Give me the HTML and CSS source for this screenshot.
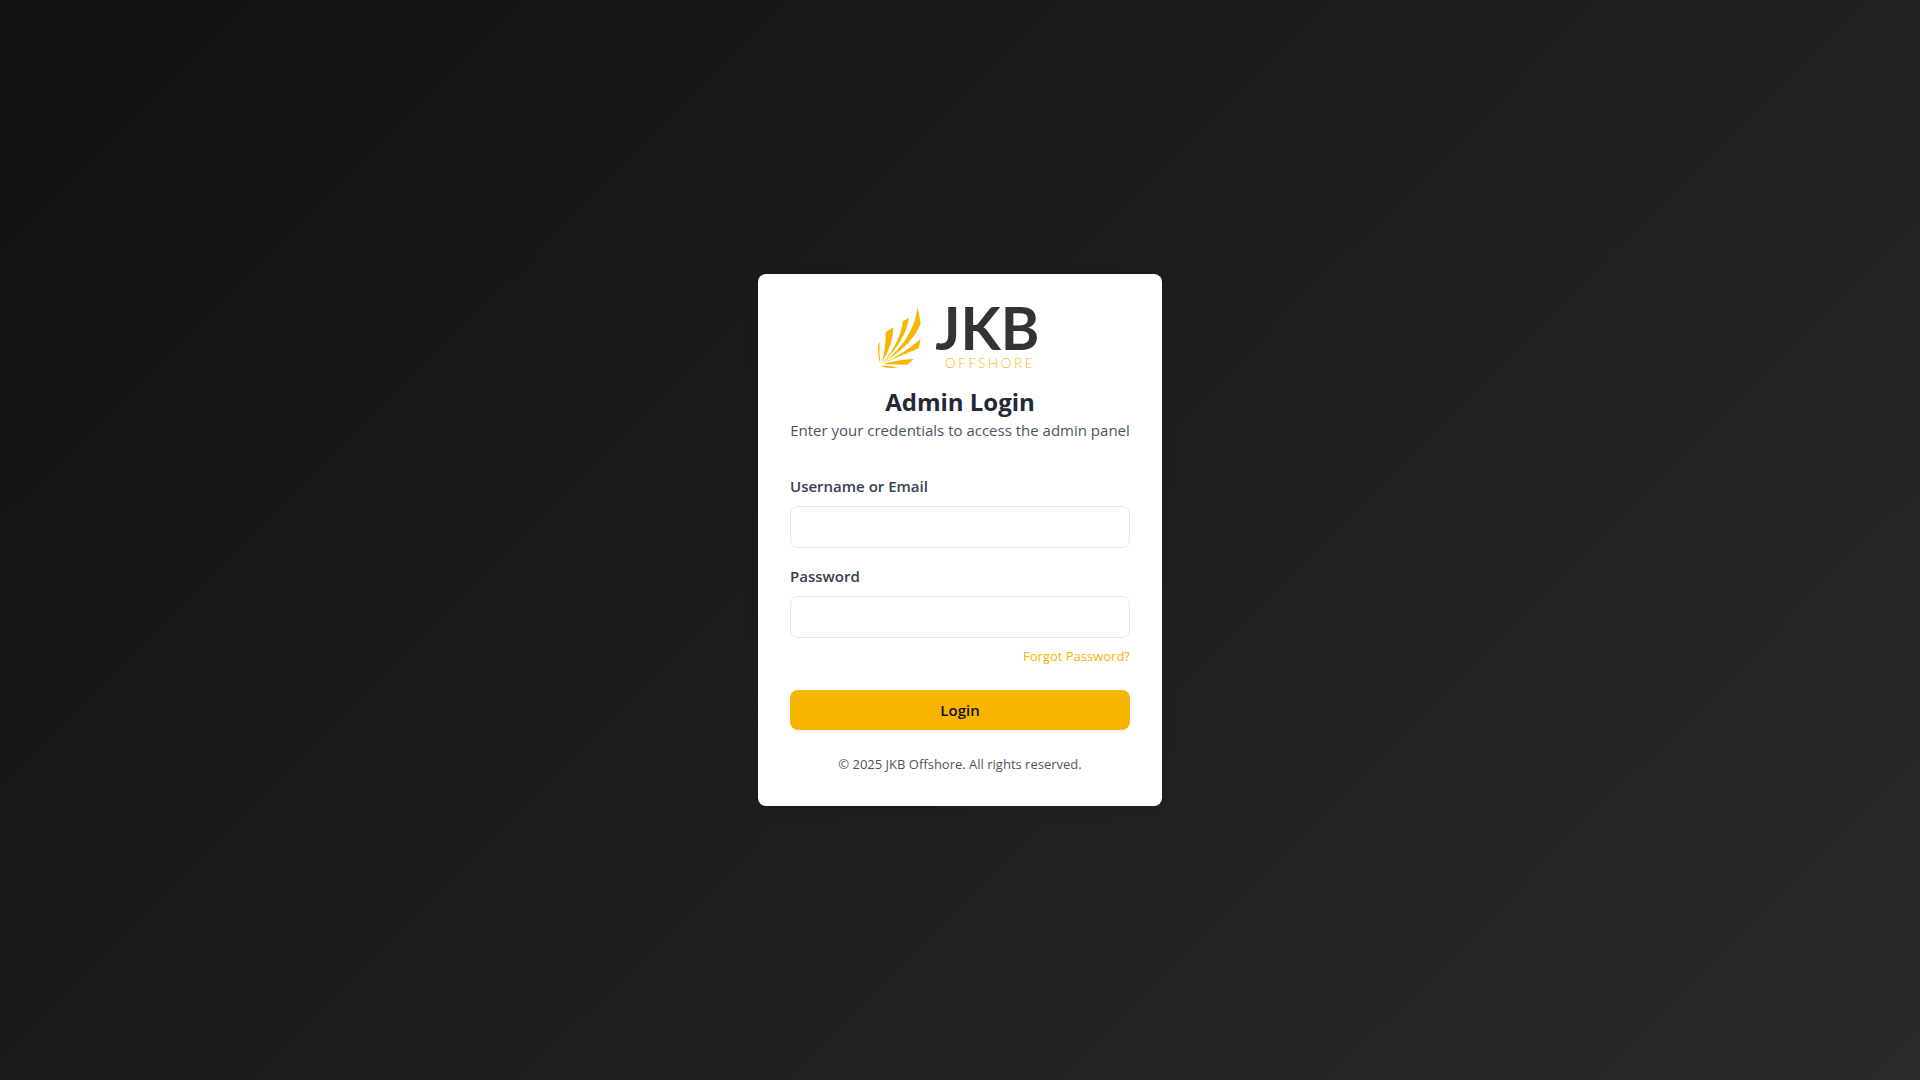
FILE: index.html
```html
<!DOCTYPE html>
<html lang="en">
<head>
    <meta charset="UTF-8">
    <meta name="viewport" content="width=device-width, initial-scale=1.0">
    <title>Admin Login - JKB Offshore</title>
    <link rel="stylesheet" href="styles.css">
</head>
<body>
    <main class="login-card">
        <header class="login-header">
            <svg class="logo" viewBox="0 0 492 192" role="img" aria-label="JKB Offshore">
                <g class="logo-leaf">
                    <path d="M5 108 Q-1 116 0 132 Q0 156 7 174 Q3 140 5 108Z"/>
                    <path d="M23 79 L46 64 Q46 118 10 171 Q24 130 23 79Z"/>
                    <path d="M75 45 L93 36 Q82 106 12 172 Q66 112 75 45Z"/>
                    <path d="M119 4 L128 52 Q108 112 14 172 Q106 102 119 4Z"/>
                    <path d="M128 99 L122 127 Q82 144 14 173 Q82 140 128 99Z"/>
                    <path d="M14 175 Q58 161 107 159 L88 176 Q50 174 14 175Z"/>
                    <path d="M6 180 Q34 178 61 184 Q32 189 6 180Z"/>
                </g>
                <text class="logo-name" x="172" y="132">JKB</text>
                <text class="logo-sub" x="201" y="186">OFFSHORE</text>
            </svg>
            <h1 class="login-title">Admin Login</h1>
            <p class="login-description">Enter your credentials to access the admin panel</p>
        </header>

        <form class="login-form" action="/admin/login" method="post">
            <div class="form-group">
                <label for="username">Username or Email</label>
                <input type="text" id="username" name="username" autocomplete="username" required>
            </div>
            <div class="form-group">
                <label for="password">Password</label>
                <input type="password" id="password" name="password" autocomplete="current-password" required>
                <a class="forgot-link" href="/admin/forgot-password">Forgot Password?</a>
            </div>
            <button class="login-button" type="submit">Login</button>
        </form>

        <footer class="login-footer">© 2025 JKB Offshore. All rights reserved.</footer>
    </main>
</body>
</html>
```

FILE: styles.css
```css
* {
    box-sizing: border-box;
}

body {
    display: flex;
    justify-content: center;
    align-items: center;
    min-height: 100vh;
    margin: 0;
    background: linear-gradient(135deg, #111, #2a2a2a);
    font-family: 'Segoe UI', 'Open Sans', 'Noto Sans', sans-serif;
    font-size: 15px;
    line-height: 24px;
}

.login-card {
    width: 100%;
    max-width: 404px;
    padding: 32px;
    background-color: #fff;
    border-radius: 8px;
    box-shadow: 0 4px 12px rgba(0, 0, 0, 0.1);
}

.login-header {
    margin-bottom: 32px;
    text-align: center;
}

.logo {
    display: block;
    width: 164px;
    height: 64px;
    margin: 0 auto 16px;
    overflow: visible;
}

.logo-leaf {
    fill: #f8b500;
}

.logo-name {
    fill: #333;
    font-family: Lato, sans-serif;
    font-size: 176px;
    font-weight: bold;
}

.logo-sub {
    fill: #f8b500;
    font-family: Lato, sans-serif;
    font-size: 40px;
    font-weight: 300;
    letter-spacing: 8px;
}

.login-title {
    margin: 0;
    color: #1f2937;
    font-size: 24px;
    font-weight: bold;
    line-height: 32px;
}

.login-description {
    margin: 0;
    color: #4b5563;
}

.form-group {
    display: flex;
    flex-direction: column;
    gap: 8px;
    margin-bottom: 16px;
}

.form-group label {
    color: #374151;
    font-weight: 600;
}

.form-group input {
    width: 100%;
    height: 42px;
    padding: 8px 12px;
    border: 1px solid #e5e7eb;
    border-radius: 8px;
    background-color: #fff;
    font: inherit;
}

.form-group input:focus {
    outline: none;
    border-color: #f8b500;
}

.forgot-link {
    align-self: flex-end;
    color: #f8b500;
    font-size: 13px;
    line-height: 20px;
    text-decoration: none;
}

.forgot-link:hover {
    text-decoration: underline;
}

.login-button {
    width: 100%;
    height: 40px;
    margin-top: 8px;
    border: none;
    border-radius: 8px;
    background-color: #f8b500;
    color: #111;
    font: inherit;
    font-weight: 600;
    cursor: pointer;
}

.login-button:hover {
    background-color: #e0a400;
}

.login-footer {
    margin-top: 24px;
    color: #4b5563;
    font-size: 13px;
    line-height: 20px;
    text-align: center;
}
```
